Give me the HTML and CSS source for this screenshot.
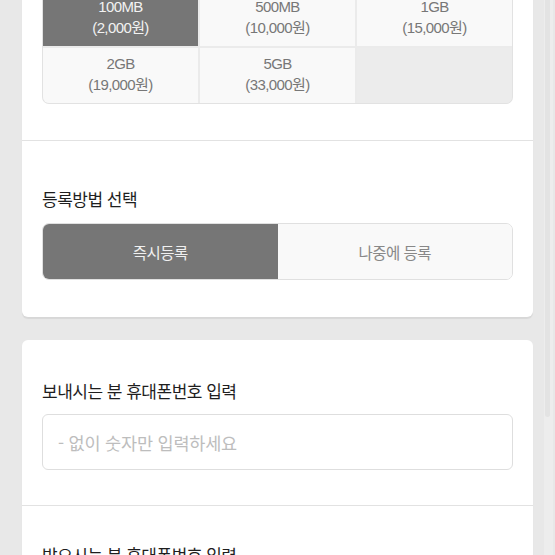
FILE: index.html
```html
<!DOCTYPE html>
<html lang="ko">
<head>
<meta charset="utf-8">
<link rel="stylesheet" href="styles.css">
</head>
<body>
<div class="page">
  <div class="card card-top">
    <section class="sec sec-grid">
      <div class="grid">
        <div class="cell on"><span>100MB</span><span>(2,000원)</span></div>
        <div class="cell"><span>500MB</span><span>(10,000원)</span></div>
        <div class="cell"><span>1GB</span><span>(15,000원)</span></div>
        <div class="cell"><span>2GB</span><span>(19,000원)</span></div>
        <div class="cell"><span>5GB</span><span>(33,000원)</span></div>
        <div class="cell empty"></div>
      </div>
    </section>
    <section class="sec sec-method">
      <h2 class="title">등록방법 선택</h2>
      <div class="seg">
        <div class="seg-item on">즉시등록</div>
        <div class="seg-item">나중에 등록</div>
      </div>
    </section>
  </div>
  <div class="card card-phone">
    <section class="sec sec-phone">
      <h2 class="title">보내시는 분 휴대폰번호 입력</h2>
      <input class="field" type="text" placeholder="- 없이 숫자만 입력하세요">
    </section>
    <section class="sec sec-phone2">
      <h2 class="title">받으시는 분 휴대폰번호 입력</h2>
    </section>
  </div>
</div>
<div class="scroll"><div class="thumb"></div></div>
</body>
</html>
```
FILE: styles.css
```css
html, body {
  margin: 0;
  padding: 0;
}
body {
  background: #e8e8e8;
  width: 555px;
  height: 555px;
  overflow: hidden;
  font-family: "Liberation Sans", "Noto Sans CJK KR", sans-serif;
}
.page {
  margin-top: -9px;
  padding-left: 22px;
  display: flex;
  flex-direction: column;
  gap: 23px;
}
.card {
  width: 511px;
  background: #fff;
  border-radius: 6px;
  box-shadow: 0 2px 1px rgba(0, 0, 0, 0.07);
}
.card-top {
  border-top-left-radius: 0;
  border-top-right-radius: 0;
}
.sec {
  padding: 0 20px;
}
.sec + .sec {
  border-top: 1px solid #e2e2e2;
}
.sec-grid {
  padding-bottom: 36px;
}
.grid {
  display: grid;
  grid-template-columns: 1fr 1fr 1fr;
  gap: 2px;
  background: #ebebeb;
  border: 1px solid #e2e2e2;
  border-top: 0;
  border-radius: 0 0 7px 7px;
  overflow: hidden;
}
.cell {
  height: 55px;
  box-sizing: border-box;
  padding-bottom: 4px;
  background: #f9f9f9;
  color: #777;
  display: flex;
  flex-direction: column;
  align-items: center;
  justify-content: center;
  font-size: 15px;
  line-height: 21px;
  letter-spacing: -0.6px;
}
.cell.on {
  background: #767676;
  color: #f2f2f2;
}
.cell.empty {
  background: #ececec;
}
.title {
  margin: 0;
  font-family: "Noto Sans CJK KR", sans-serif;
  font-weight: 400;
  font-size: 17px;
  line-height: 24px;
  color: #1e1e1e;
  letter-spacing: -0.5px;
}
.sec-method {
  padding-top: 46px;
  padding-bottom: 37px;
}
.seg {
  margin-top: 12px;
  display: flex;
  height: 57px;
  border: 1px solid #e0e0e0;
  border-radius: 7px;
  overflow: hidden;
  box-sizing: border-box;
}
.seg-item {
  flex: 1;
  display: flex;
  align-items: center;
  justify-content: center;
  font-family: "Noto Sans CJK KR", sans-serif;
  font-size: 15.5px;
  color: #888;
  background: #f9f9f9;
  letter-spacing: -0.5px;
}
.seg-item.on {
  background: #767676;
  color: #f0f0f0;
}
.sec-phone {
  padding-top: 39px;
  padding-bottom: 35px;
}
.field {
  display: block;
  margin-top: 11px;
  width: 100%;
  height: 56px;
  box-sizing: border-box;
  border: 1px solid #dedede;
  border-radius: 6px;
  padding: 0 15px;
  font-family: "Noto Sans CJK KR", sans-serif;
  font-size: 17.5px;
  color: #333;
  outline: none;
  background: #fff;
}
.field::placeholder {
  color: #bdbdbd;
  letter-spacing: -0.2px;
}
.sec-phone2 {
  padding-top: 37px;
  padding-bottom: 40px;
}
.scroll {
  position: fixed;
  top: 0;
  right: 2px;
  width: 9px;
  height: 555px;
  background: #ededed;
}
.thumb {
  width: 5px;
  margin-left: 1px;
  height: 417px;
  background: #e3e3e3;
  border-radius: 0 0 3px 3px;
}
```
